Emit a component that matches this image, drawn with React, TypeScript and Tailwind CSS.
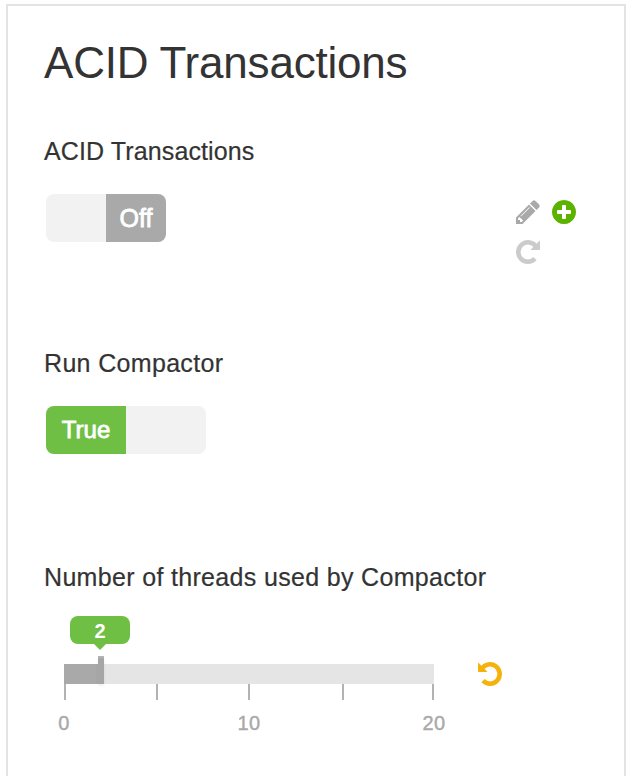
import React from 'react';

const PENCIL =
  'M491 1536l91-91-235-235-91 91v107h128v128h107zm523-928q0-22-22-22-10 0-17 7l-542 542q-7 7-7 17 0 22 22 22 10 0 17-7l542-542q7-7 7-17zm-54-192l416 416-832 832h-416v-416zm683 96q0 53-37 90l-166 166-416-416 166-165q36-38 90-38 53 0 91 38l235 234q37 39 37 91z';
const PLUS_CIRCLE =
  'M1344 960v-128q0-26-19-45t-45-19h-256v-256q0-26-19-45t-45-19h-128q-26 0-45 19t-19 45v256h-256q-26 0-45 19t-19 45v128q0 26 19 45t45 19h256v256q0 26 19 45t45 19h128q26 0 45-19t19-45v-256h256q26 0 45-19t19-45zm320-64q0 209-103 385.5t-279.5 279.5-385.5 103-385.5-103-279.5-279.5-103-385.5 103-385.5 279.5-279.5 385.5-103 385.5 103 279.5 279.5 103 385.5z';

function Icon({ path, className }: { path: string; className: string }) {
  return (
    <svg viewBox="0 0 1792 1792" className={`block size-7 shrink-0 fill-current ${className}`}>
      <path d={path} />
    </svg>
  );
}

function RepeatIcon({ className }: { className: string }) {
  return (
    <svg viewBox="0 0 28 28" className={`block size-7 shrink-0 ${className}`}>
      <path d="M22.2 8.8A9.7 9.7 0 1 0 21 20.7" fill="none" stroke="currentColor" strokeWidth="4.6" />
      <path
        d="M25.5 3.2V11.5H17.3Z"
        fill="currentColor"
        stroke="currentColor"
        strokeWidth="1"
        strokeLinejoin="round"
      />
    </svg>
  );
}

function Label({ children, className }: { children: React.ReactNode; className: string }) {
  return (
    <div
      className={`h-[30px] whitespace-nowrap text-[25px] leading-[30px] [-webkit-text-stroke:0.2px_#333] ${className}`}
    >
      {children}
    </div>
  );
}

function Slider() {
  return (
    <div className="relative ml-5 w-[370px]">
      <div className="flex h-5 bg-[#e5e5e5]">
        <div className="w-[34px] bg-[#a9a9a9]" />
        <div className="-mt-2 h-7 w-1.5 border-t-2 border-[#b3b3b3] bg-[#a6a6a6] shadow-[0_2px_3px_rgba(0,0,0,0.06)]" />
      </div>
      <div className="absolute -top-12 left-1.5 flex flex-col items-center">
        <div className="flex h-7 w-[60px] items-center justify-center rounded-[8px] bg-[#6fbf44] pt-0.5 text-[20px] leading-7 font-bold text-white">
          2
        </div>
        <div className="size-0 border-x-[6px] border-t-[6px] border-x-transparent border-t-[#6fbf44]" />
      </div>
      <div className="flex h-4">
        <div className="w-0.5 bg-[#b2b2b2]" />
        <div className="ml-[90px] w-0.5 bg-[#b2b2b2]" />
        <div className="ml-[90px] w-0.5 bg-[#b2b2b2]" />
        <div className="ml-[92px] w-0.5 bg-[#b2b2b2]" />
        <div className="ml-[88px] w-0.5 bg-[#b2b2b2]" />
      </div>
      <div className="-mx-5 mt-2.5 flex justify-between text-center text-[20px] leading-[26px] tracking-[0.3px] text-[#a9a9a9] [-webkit-text-stroke:0.4px_#a9a9a9]">
        <span className="w-10">0</span>
        <span className="w-10">10</span>
        <span className="w-10">20</span>
      </div>
    </div>
  );
}

export default function App() {
  return (
    <div className="h-[776px] overflow-hidden bg-white pt-1 pr-0.5 pl-1.5 font-['Liberation_Sans',Arial,sans-serif] text-[#333]">
      <main className="h-[800px] border-2 border-[#e3e3e3] pl-9">
        <h1 className="mt-[30px] h-[54px] text-[44px] leading-[54px] tracking-[-0.2px] whitespace-nowrap">
          ACID Transactions
        </h1>

        <Label className="mt-[46px] tracking-[0.12px]">ACID Transactions</Label>
        <div className="mt-7 flex h-[70px] items-start">
          <div className="ml-0.5 flex h-12 w-[120px] overflow-hidden rounded-[8px] bg-[#f2f2f2]">
            <div className="ml-auto w-[60px] bg-[#a9a9a9] text-center text-[25px] leading-12 text-white [-webkit-text-stroke:0.8px_white]">
              Off
            </div>
          </div>
          <div className="mt-1 ml-[348px] grid grid-cols-2 gap-x-2 gap-y-3">
            <Icon path={PENCIL} className="text-[#a9a9a9]" />
            <Icon path={PLUS_CIRCLE} className="text-[#5bb300]" />
            <RepeatIcon className="text-[#cbcbcb]" />
          </div>
        </div>

        <Label className="mt-[84px] tracking-[0.33px]">Run Compactor</Label>
        <div className="mt-7 ml-0.5 flex h-12 w-40 overflow-hidden rounded-[8px] bg-[#f2f2f2]">
          <div className="w-20 bg-[#6fbf44] text-center text-[24px] leading-12 text-white [-webkit-text-stroke:0.8px_white]">
            True
          </div>
        </div>

        <Label className="mt-[108px] tracking-[0.33px]">Number of threads used by Compactor</Label>
        <div className="mt-[72px] flex items-start">
          <Slider />
          <RepeatIcon className="-mt-1 ml-[42px] -scale-x-100 text-[#f5b20b]" />
        </div>
      </main>
    </div>
  );
}
